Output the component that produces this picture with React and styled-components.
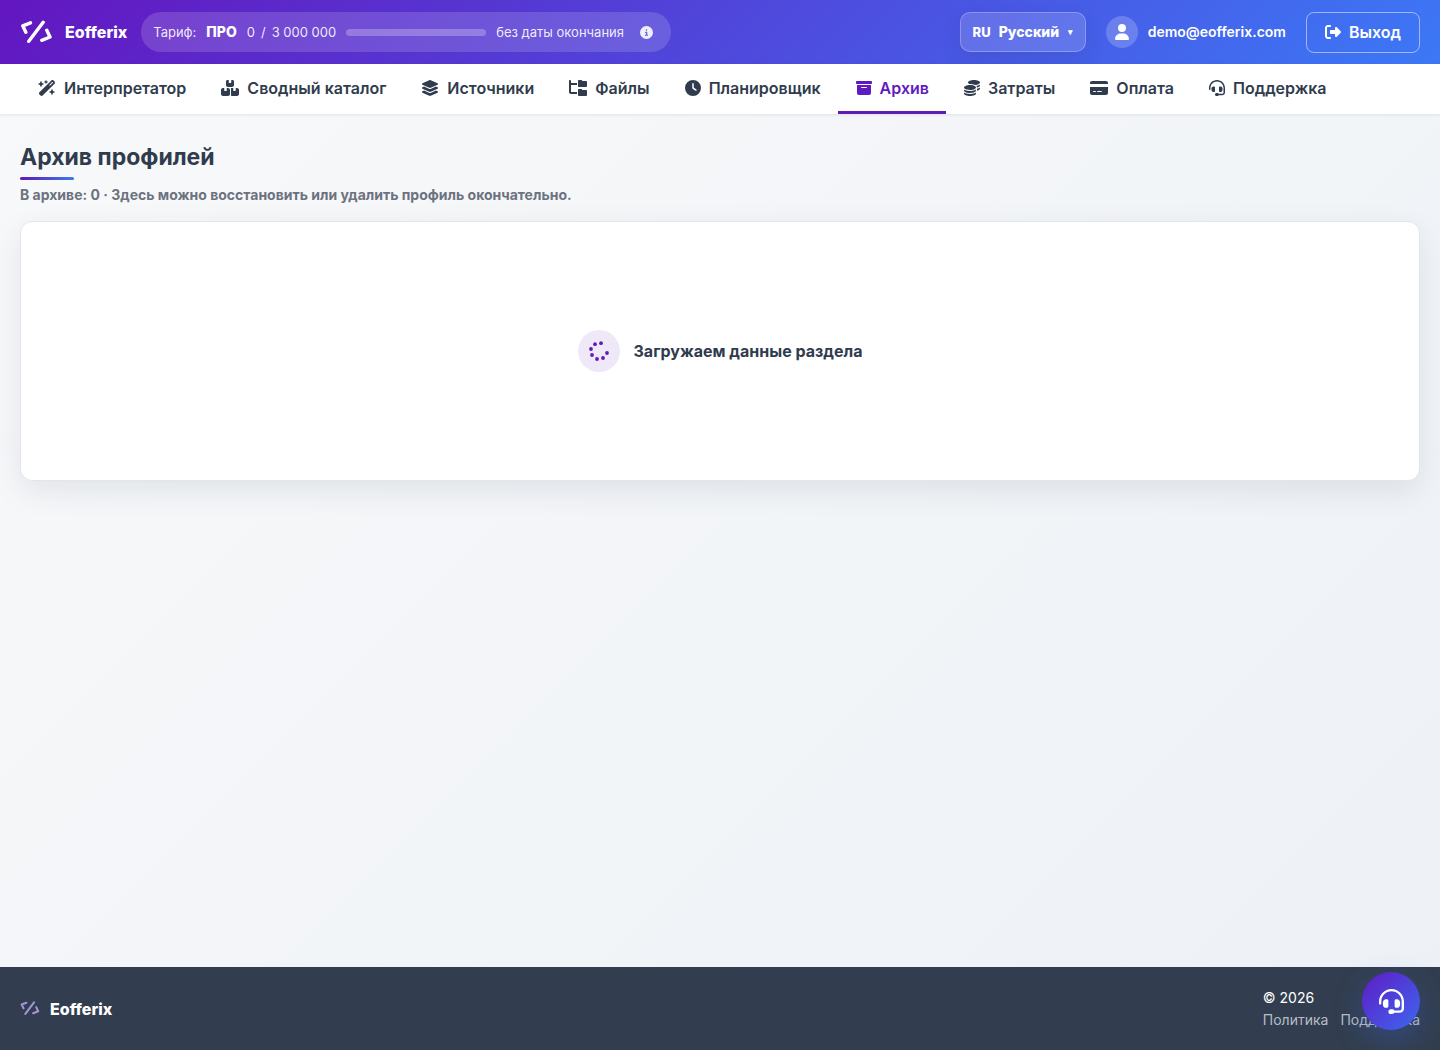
import React from "react";
import styled, { createGlobalStyle } from "styled-components";
import {
    FaBoxArchive,
    FaBoxesStacked,
    FaCircleInfo,
    FaClock,
    FaCoins,
    FaCreditCard,
    FaFolderTree,
    FaHeadset,
    FaLayerGroup,
    FaRightFromBracket,
    FaUser,
    FaWandMagicSparkles,
} from "react-icons/fa6";

const GlobalStyle = createGlobalStyle`
    *, *::before, *::after {
        box-sizing: border-box;
    }

    body {
        margin: 0;
        color: #303c4d;
        font-family: Inter, "Noto Sans", sans-serif;
        font-size: 16px;
        line-height: 24px;
    }

    button, select {
        font: inherit;
        color: inherit;
    }

    a {
        color: inherit;
        text-decoration: none;
    }

    svg {
        display: block;
        flex: none;
    }
`;

const Page = styled.div`
    min-height: 100vh;
    display: flex;
    flex-direction: column;
    background: linear-gradient(135deg, #f8f9fa 0%, #edf1f6 100%);
`;

const Header = styled.header`
    height: 64px;
    padding: 0 20px;
    display: flex;
    align-items: center;
    justify-content: space-between;
    color: #fff;
    background: linear-gradient(135deg, #6316c0 0%, #3c78f6 100%);
`;

const HeaderGroup = styled.div`
    display: flex;
    align-items: center;
    gap: ${({ $gap }) => $gap}px;
`;

const Brand = styled.a`
    display: flex;
    align-items: center;
    gap: ${({ $small }) => ($small ? 10 : 12)}px;
    color: #fff;
    font-weight: 800;

    svg {
        width: ${({ $small }) => ($small ? 20 : 33)}px;
        color: ${({ $small }) => ($small ? "#a294d6" : "#fff")};
    }
`;

const Plan = styled.div`
    height: 40px;
    padding: 0 18px 0 12px;
    display: flex;
    align-items: center;
    gap: 10px;
    border-radius: 20px;
    background: rgba(255, 255, 255, 0.15);
    color: rgba(255, 255, 255, 0.9);
    font-size: 13px;

    strong {
        color: #fff;
        font-size: 14px;
        font-weight: 800;
    }

    svg {
        margin-left: 6px;
    }
`;

const Usage = styled.div`
    display: flex;
    gap: 6px;
`;

const Meter = styled.div`
    width: 140px;
    height: 7px;
    border-radius: 4px;
    background: rgba(255, 255, 255, 0.25);
`;

const Language = styled.label`
    height: 40px;
    padding: 0 12px;
    display: flex;
    align-items: center;
    gap: 8px;
    border: 1px solid rgba(255, 255, 255, 0.25);
    border-radius: 10px;
    background: rgba(255, 255, 255, 0.15);
    box-shadow: 0 8px 20px rgba(31, 41, 90, 0.1);
    font-size: 13px;
    font-weight: 800;

    select {
        appearance: none;
        padding: 0;
        border: 0;
        background: none;
        font-size: 14px;
    }

    small {
        font-size: 9px;
    }
`;

const Account = styled.div`
    display: flex;
    align-items: center;
    gap: 10px;
    font-size: 14px;
    font-weight: 600;
`;

const Avatar = styled.span`
    width: 32px;
    height: 32px;
    display: grid;
    place-items: center;
    border-radius: 50%;
    background: rgba(255, 255, 255, 0.2);
`;

const LogoutButton = styled.button`
    height: 41px;
    padding: 0 18px;
    display: flex;
    align-items: center;
    gap: 8px;
    border: 1px solid rgba(255, 255, 255, 0.5);
    border-radius: 8px;
    background: none;
    font-weight: 600;
    cursor: pointer;
`;

const Nav = styled.nav`
    height: 50px;
    padding: 0 20px;
    display: flex;
    background: #fff;
    box-shadow: 0 1px 3px rgba(48, 60, 77, 0.1);
`;

const NavLink = styled.a`
    padding: 0 17px 0 18px;
    display: flex;
    align-items: center;
    gap: 8px;
    border-bottom: 3px solid ${({ $active }) => ($active ? "#5f1bb8" : "transparent")};
    color: ${({ $active }) => ($active ? "#5f1bc0" : "#303c4d")};
    font-weight: 600;
    white-space: nowrap;

    svg {
        width: ${({ $wide }) => ($wide ? 18 : 16)}px;
        height: 16px;
    }
`;

const Main = styled.main`
    flex: 1;
    padding: 28px 20px;
`;

const Title = styled.h1`
    margin: 0;
    font-size: 23px;
    line-height: 30px;
    font-weight: 700;

    &::after {
        content: "";
        display: block;
        width: 54px;
        height: 3px;
        margin-top: 5px;
        border-radius: 2px;
        background: linear-gradient(90deg, #5f1bb8, #3f78ea);
    }
`;

const Subtitle = styled.p`
    margin: 5px 0 16px;
    color: #6c727f;
    font-size: 14px;
    line-height: 20px;
    font-weight: 700;
`;

const Panel = styled.section`
    height: 260px;
    display: flex;
    align-items: center;
    justify-content: center;
    gap: 14px;
    border: 1px solid #e2e5eb;
    border-radius: 12px;
    background: #fff;
    box-shadow: 0 10px 30px rgba(48, 60, 77, 0.1);
    font-weight: 700;
`;

const SpinnerDisc = styled.span`
    width: 42px;
    height: 42px;
    display: grid;
    place-items: center;
    border-radius: 50%;
    background: #efe8f8;
    color: #5f1bb8;
`;

const Footer = styled.footer`
    min-height: 83px;
    padding: 0 20px;
    display: flex;
    align-items: center;
    justify-content: space-between;
    background: #323e4f;
    color: #fff;
    font-size: 14px;
    line-height: 22px;

    ${Brand} {
        font-size: 16px;
    }
`;

const FooterLinks = styled.div`
    display: flex;
    gap: 12px;
    color: #b7bdc6;
`;

const SupportButton = styled.button`
    position: fixed;
    right: 20px;
    bottom: 20px;
    width: 58px;
    height: 58px;
    display: grid;
    place-items: center;
    border: 0;
    border-radius: 50%;
    background: linear-gradient(135deg, #5f1bc4, #3c68f0);
    box-shadow: 0 10px 30px rgba(60, 104, 240, 0.3);
    color: #fff;
    cursor: pointer;
`;

const navItems = [
    { label: "Интерпретатор", Icon: FaWandMagicSparkles, wide: true },
    { label: "Сводный каталог", Icon: FaBoxesStacked, wide: true },
    { label: "Источники", Icon: FaLayerGroup, wide: true },
    { label: "Файлы", Icon: FaFolderTree, wide: true },
    { label: "Планировщик", Icon: FaClock },
    { label: "Архив", Icon: FaBoxArchive, active: true },
    { label: "Затраты", Icon: FaCoins },
    { label: "Оплата", Icon: FaCreditCard, wide: true },
    { label: "Поддержка", Icon: FaHeadset },
];

const Logo = () => (
    <svg viewBox="0 0 33 24" fill="none" stroke="currentColor" strokeWidth="3.4" strokeLinecap="round" strokeLinejoin="round">
        <path d="M10.5 2.8 2.8 5.8 5.8 12.2M23.2 2.3 8.8 21.3M26.8 10.2 30 17 21.8 20.3" />
    </svg>
);

const dots = [
    [12, 2.2],
    [6, 3.2],
    [2, 8],
    [3, 14],
    [8, 18],
    [14, 17],
    [18, 12],
];

const Spinner = () => (
    <svg width="20" height="20" viewBox="0 0 20 20" fill="currentColor">
        {dots.map(([cx, cy]) => (
            <circle key={cx} cx={cx} cy={cy} r="1.9" />
        ))}
    </svg>
);

export default function App() {
    return (
        <>
            <GlobalStyle />
            <Page>
                <Header>
                    <HeaderGroup $gap={14}>
                        <Brand href="#">
                            <Logo />
                            Eofferix
                        </Brand>
                        <Plan>
                            <span>Тариф:</span>
                            <strong>ПРО</strong>
                            <Usage>
                                <span>0</span>
                                <span>/</span>
                                <span>3 000 000</span>
                            </Usage>
                            <Meter />
                            <span>без даты окончания</span>
                            <FaCircleInfo />
                        </Plan>
                    </HeaderGroup>
                    <HeaderGroup $gap={20}>
                        <Language>
                            RU
                            <select aria-label="Язык" defaultValue="ru">
                                <option value="ru">Русский</option>
                            </select>
                            <small>▾</small>
                        </Language>
                        <Account>
                            <Avatar>
                                <FaUser size={16} />
                            </Avatar>
                            demo@eofferix.com
                        </Account>
                        <LogoutButton type="button">
                            <FaRightFromBracket />
                            Выход
                        </LogoutButton>
                    </HeaderGroup>
                </Header>
                <Nav>
                    {navItems.map(({ label, Icon, active, wide }) => (
                        <NavLink key={label} href="#" $active={active} $wide={wide}>
                            <Icon />
                            {label}
                        </NavLink>
                    ))}
                </Nav>
                <Main>
                    <Title>Архив профилей</Title>
                    <Subtitle>В архиве: 0 · Здесь можно восстановить или удалить профиль окончательно.</Subtitle>
                    <Panel>
                        <SpinnerDisc>
                            <Spinner />
                        </SpinnerDisc>
                        Загружаем данные раздела
                    </Panel>
                </Main>
                <Footer>
                    <Brand href="#" $small>
                        <Logo />
                        Eofferix
                    </Brand>
                    <div>
                        <div>© 2026</div>
                        <FooterLinks>
                            <a href="#">Политика</a>
                            <a href="#">Поддержка</a>
                        </FooterLinks>
                    </div>
                </Footer>
            </Page>
            <SupportButton type="button" aria-label="Поддержка">
                <FaHeadset size={25} />
            </SupportButton>
        </>
    );
}
